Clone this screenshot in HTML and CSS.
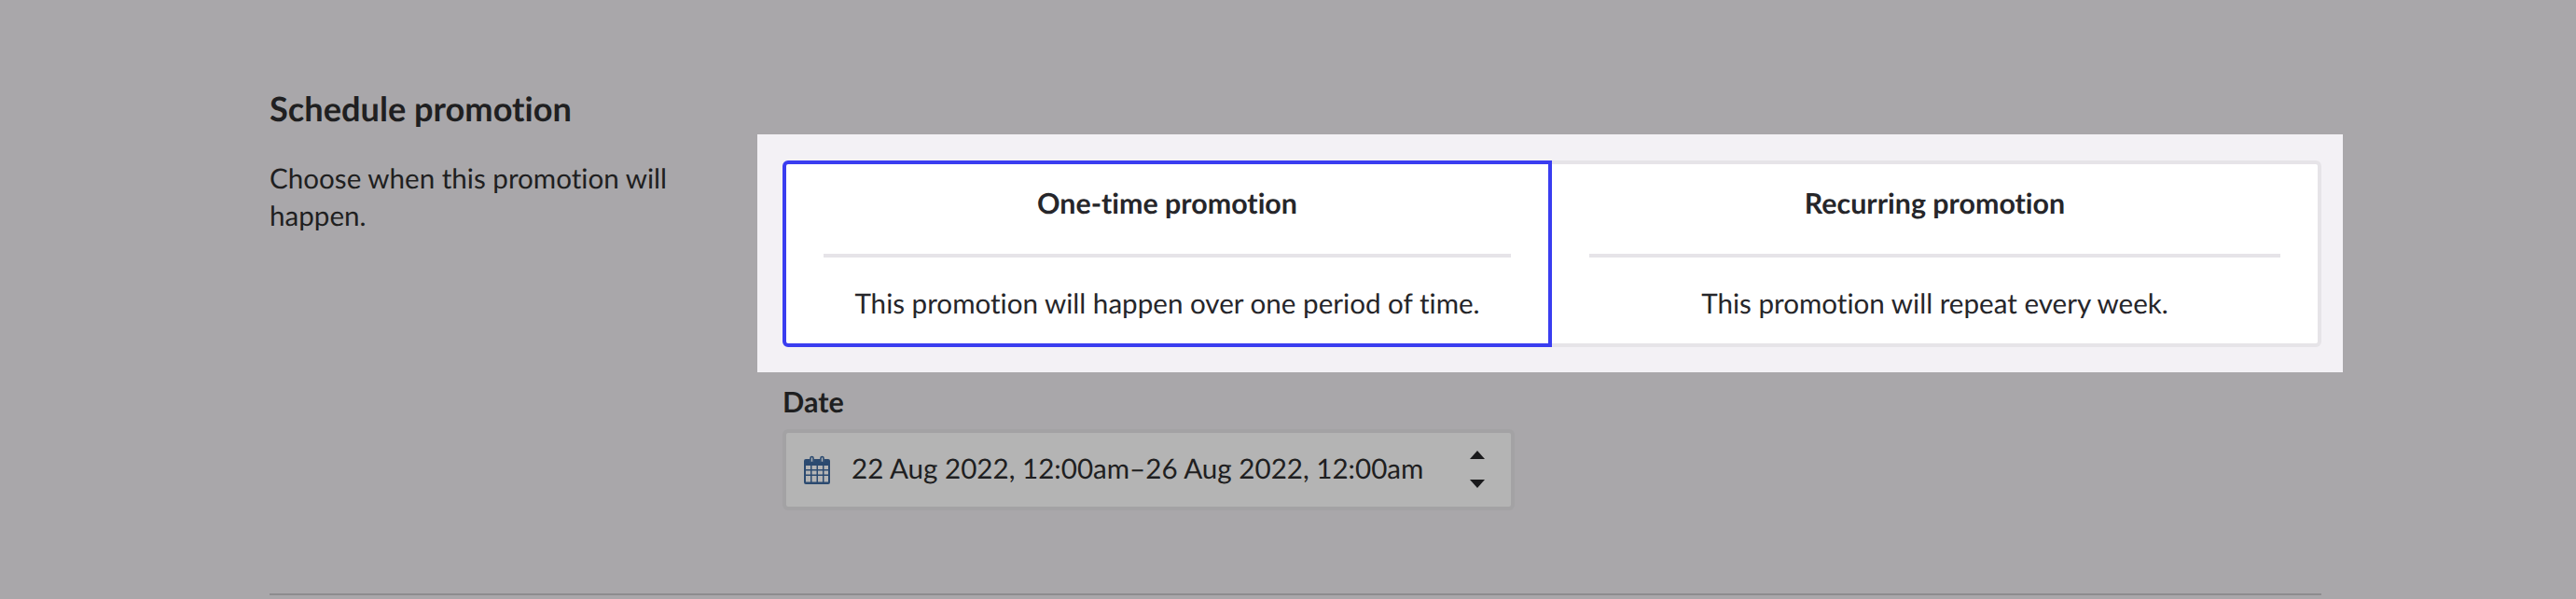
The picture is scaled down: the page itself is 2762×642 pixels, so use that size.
FILE: index.html
```html
<!DOCTYPE html>
<html lang="en">

<head>
    <meta charset="utf-8">
    <meta name="viewport" content="width=device-width, initial-scale=1.0">
    <title>Schedule promotion</title>
    <link rel="stylesheet" href="styles.css">
</head>

<body>
    <main class="schedule">
        <h2 class="schedule-title">Schedule promotion</h2>
        <div class="schedule-row">
            <p class="schedule-text">Choose when this promotion will happen.</p>
            <div class="schedule-form">
                <div class="spotlight">
                    <div class="choice choice-active">
                        <h3>One-time promotion</h3>
                        <hr>
                        <p>This promotion will happen over one period of time.</p>
                    </div>
                    <div class="choice">
                        <h3>Recurring promotion</h3>
                        <hr>
                        <p>This promotion will repeat every week.</p>
                    </div>
                </div>
                <div class="date-field">
                    <label class="date-label">Date</label>
                    <div class="date-input">
                        <svg class="date-icon" width="28" height="31" viewBox="0 0 28 31">
                            <path fill="#2b4a70" d="M2 4h4.500v3.500h4V4h7v3.500h4V4H26a2 2 0 0 1 2 2v23a2 2 0 0 1-2 2H2a2 2 0 0 1-2-2V6a2 2 0 0 1 2-2z"/>
                            <path fill="#b4b4b4" stroke="#2b4a70" stroke-width="1.600" d="M7 7.500V3a1.500 1.500 0 0 1 3 0v4.500zM18 7.500V3a1.500 1.500 0 0 1 3 0v4.500z"/>
                            <path fill="#b4b4b4" d="M2 11h5v4H2zM8.500 11h5v4h-5zM15 11h5v4h-5zM21.500 11H26v4h-4.500zM2 16.500h5v4H2zM8.500 16.500h5v4h-5zM15 16.500h5v4h-5zM21.500 16.500H26v4h-4.500zM2 22h5v6.500H2zM8.500 22h5v6.500h-5zM15 22h5v6.500h-5zM21.500 22H26v6.500h-4.500z"/>
                        </svg>
                        <span class="date-value">22 Aug 2022, 12:00am–26 Aug 2022, 12:00am</span>
                        <span class="date-arrows">
                            <span class="arrow-up"></span>
                            <span class="arrow-down"></span>
                        </span>
                    </div>
                </div>
            </div>
        </div>
        <hr class="schedule-rule">
    </main>
</body>

</html>
```

FILE: styles.css
```css
body {
    margin: 0;
    background: #a9a7aa;
    color: #1f1f21;
    font-family: Lato, "Liberation Sans", sans-serif;
    font-variant-ligatures: none;
    text-rendering: geometricPrecision;
    overflow: hidden;
}

.schedule {
    height: 642px;
    box-sizing: border-box;
    padding: 92px 273px 0 289px;
}

.schedule-title {
    margin: 0;
    height: 52px;
    font-size: 36.2px;
    line-height: 48px;
    font-weight: 700;
}

.schedule-text {
    width: 440px;
    margin: 28px 83px 0 0;
    font-size: 29.6px;
    line-height: 40px;
}

.schedule-row {
    display: flex;
}

.schedule-form {
    flex: 1;
    margin-right: -23px;
}

.spotlight {
    display: flex;
    padding: 28px 23px 27px 27px;
    background: #f3f1f5;
}

.choice {
    flex: 1;
    height: 200px;
    box-sizing: border-box;
    padding: 0 40px;
    border: 4px solid #e6e4e8;
    border-left: 0;
    border-radius: 0 6px 6px 0;
    background: #fff;
    text-align: center;
}

.choice-active {
    flex: none;
    width: 825px;
    border: 4px solid #3a3df0;
    border-radius: 6px 0 0 6px;
}

.choice h3 {
    margin: 0;
    padding: 22px 0 0;
    height: 96px;
    box-sizing: border-box;
    font-size: 30.4px;
    line-height: 40px;
    font-weight: 700;
    color: #26262a;
}

.choice hr {
    margin: 0;
    height: 4px;
    border: 0;
    background: #e6e4e8;
}

.choice p {
    margin: 0;
    padding-top: 30px;
    font-size: 29.6px;
    line-height: 40px;
    color: #26262a;
}

.date-field {
    margin-left: 27px;
    padding-top: 12px;
}

.date-label {
    display: block;
    height: 49px;
    font-size: 30.6px;
    line-height: 40px;
    font-weight: 700;
}

.date-input {
    display: flex;
    align-items: center;
    width: 785px;
    height: 87px;
    box-sizing: border-box;
    padding: 0 28px 0 19px;
    border: 4px solid #a3a2a4;
    border-radius: 6px;
    background: #b4b4b4;
}

.date-icon {
    flex: none;
}

.date-value {
    flex: 1;
    margin: 0 0 2px 23px;
    font-size: 29.6px;
}

.date-arrows {
    display: flex;
    flex-direction: column;
    gap: 22px;
    margin-bottom: 2px;
}

.arrow-up {
    border: 8px solid transparent;
    border-top: 0;
    border-bottom: 9px solid #1a1a1c;
}

.arrow-down {
    border: 8px solid transparent;
    border-bottom: 0;
    border-top: 9px solid #1a1a1c;
}

.schedule-rule {
    margin: 0;
    position: absolute;
    left: 289px;
    top: 636px;
    width: 2200px;
    height: 2px;
    border: 0;
    background: #8d8c8e;
}
```
